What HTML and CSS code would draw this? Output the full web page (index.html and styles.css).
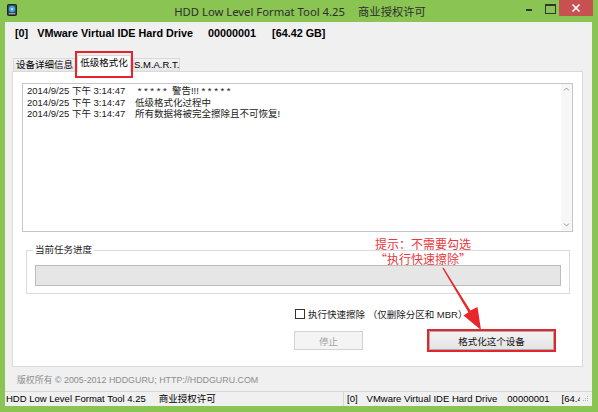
FILE: index.html
```html
<!DOCTYPE html>
<html lang="zh-CN">
<head>
    <meta charset="UTF-8">
    <meta name="viewport" content="width=device-width, initial-scale=1.0">
    <title>HDD Low Level Format Tool 4.25</title>
    <link rel="stylesheet" href="styles.css">
</head>
<body>
<div class="window">
    <div class="titlebar">
        <svg class="app-icon" viewBox="0 0 10 12" width="10" height="12">
            <rect x="0.5" y="0.5" width="9" height="11" rx="1" fill="#3b444d" stroke="#1d2329"/>
            <circle cx="5" cy="5" r="3.2" fill="#3fa4dc"/>
            <circle cx="5" cy="5" r="1" fill="#e4f5ff"/>
            <rect x="2" y="9" width="6" height="1.2" fill="#9aa3ab"/>
        </svg>
        <div class="title">HDD Low Level Format Tool 4.25<span class="title-cn">商业授权许可</span></div>
        <div class="caption">
            <span class="cap cap-min"></span>
            <span class="cap cap-max"></span>
            <span class="cap cap-close">
                <svg viewBox="0 0 34 16" width="34" height="16">
                    <path d="M13.5 4.5 L20.5 11.5 M20.5 4.5 L13.5 11.5" stroke="#fff" stroke-width="1.6"/>
                </svg>
            </span>
        </div>
    </div>

    <div class="client">
        <div class="drive-line">
            <span class="drv-idx">[0]</span>
            <span class="drv-name">VMware Virtual IDE Hard Drive</span>
            <span class="drv-serial">00000001</span>
            <span>[64.42 GB]</span>
        </div>

        <div class="tabs">
            <div class="tab tab-info">设备详细信息</div>
            <div class="tab tab-active">低级格式化</div>
            <div class="tab tab-smart">S.M.A.R.T.</div>
        </div>

        <div class="panel">
            <div class="log">
                <div class="log-lines">
                    <div class="log-line"><span class="stamp">2014/9/25 下午 3:14:47</span><span> * * * * *  警告!!! * * * * *</span></div>
                    <div class="log-line"><span class="stamp">2014/9/25 下午 3:14:47</span><span>低级格式化过程中</span></div>
                    <div class="log-line"><span class="stamp">2014/9/25 下午 3:14:47</span><span>所有数据将被完全擦除且不可恢复!</span></div>
                </div>
                <div class="scrollbar">
                    <svg viewBox="0 0 11 11" width="11" height="11"><path d="M3 6.5 L5.5 4 L8 6.5" fill="none" stroke="#9a9a9a" stroke-width="1"/></svg>
                    <svg viewBox="0 0 11 11" width="11" height="11"><path d="M3 4.5 L5.5 7 L8 4.5" fill="none" stroke="#9a9a9a" stroke-width="1"/></svg>
                </div>
            </div>

            <fieldset class="progress-group">
                <legend>当前任务进度</legend>
                <div class="progress"></div>
            </fieldset>

            <div class="actions">
                <label class="quick-erase"><span class="checkbox"></span>执行快速擦除 （仅删除分区和 MBR）</label>
                <div class="buttons">
                    <button class="btn btn-stop" disabled>停止</button>
                    <button class="btn btn-format">格式化这个设备</button>
                </div>
            </div>

            <!-- 标注 -->
            <div class="note">提示：不需要勾选<br>“执行快速擦除”</div>
            <svg class="arrow" viewBox="0 0 571 296" width="571" height="296">
                <polygon points="430.6,195.7 457.4,238.6 464.5,235 468,258 450.5,243.6 455.4,240.2 429.4,196.3" fill="#e8262b"/>
            </svg>
        </div>

        <div class="copyright">版权所有 © 2005-2012 HDDGURU; HTTP://HDDGURU.COM</div>

        <div class="statusbar">
            <div class="status-left">HDD Low Level Format Tool 4.25<span class="status-cn">商业授权许可</span></div>
            <div class="status-right">
                <span class="drv-idx">[0]</span><span class="st-name">VMware Virtual IDE Hard Drive</span><span class="st-serial">00000001</span><span>[64.42 GB]</span>
            </div>
            <svg class="grip" viewBox="0 0 10 13" width="10" height="13">
                <g fill="#b5b5b5">
                    <rect x="7" y="4" width="1" height="1"/>
                    <rect x="5" y="6" width="1" height="1"/><rect x="7" y="6" width="1" height="1"/>
                    <rect x="3" y="8" width="1" height="1"/><rect x="5" y="8" width="1" height="1"/><rect x="7" y="8" width="1" height="1"/>
                </g>
            </svg>
        </div>
    </div>
</div>
</body>
</html>
```

FILE: styles.css
```css
* {
    box-sizing: border-box;
}

body {
    margin: 0;
    width: 598px;
    height: 412px;
    overflow: hidden;
    background-color: #8ac453;
    font-family: "Liberation Sans", "Noto Sans CJK SC", sans-serif;
    font-size: 9.5px;
    color: #000;
}

.window {
    display: flex;
    flex-direction: column;
    height: 412px;
    padding-bottom: 6px;
    background-color: #8ac453;
}

/* 标题栏 */
.titlebar {
    flex: none;
    height: 22px;
    display: grid;
    grid-template-columns: 1fr auto 1fr;
    padding: 0 5px 0 7px;
}

.app-icon {
    margin-top: 4px;
}

.title {
    font-family: "Noto Sans", "Noto Sans CJK SC", sans-serif;
    font-size: 11.3px;
    line-height: 22px;
    padding-top: 1px;
    color: #2e2e2e;
    white-space: nowrap;
}

.title-cn {
    margin-left: 13px;
}

.caption {
    justify-self: end;
    display: flex;
    align-items: flex-start;
}

.cap {
    position: relative;
    height: 16px;
}

.cap-min {
    width: 22px;
}

.cap-min::before {
    content: "";
    position: absolute;
    left: 8px;
    top: 9px;
    width: 6px;
    height: 2px;
    background-color: #333;
}

.cap-max {
    width: 19px;
}

.cap-max::before {
    content: "";
    position: absolute;
    left: 5px;
    top: 4px;
    width: 9px;
    height: 7px;
    border: 1px solid #333;
    border-top-width: 2px;
}

.cap-close {
    width: 34px;
    background-color: #c75050;
}

.cap-close svg {
    display: block;
}

/* 客户区 */
.client {
    flex: 1;
    display: flex;
    flex-direction: column;
    margin: 0 6px 0 5px;
    background-color: #f0f0f0;
}

.drive-line {
    flex: none;
    height: 33px;
    display: flex;
    padding: 5px 0 0 10px;
    font-size: 10.8px;
    line-height: 12px;
    font-weight: bold;
    white-space: nowrap;
}

.drv-idx {
    margin-right: 9px;
}

.drv-name {
    margin-right: 15px;
}

.drv-serial {
    margin-right: 16px;
}

/* 选项卡 */
.tabs {
    flex: none;
    display: flex;
    align-items: flex-end;
    height: 17px;
    margin-bottom: -1px;
    padding-left: 8px;
    position: relative;
    z-index: 2;
}

.tab {
    height: 14px;
    text-align: center;
    line-height: 12px;
    border: 1px solid #d9d9d9;
    background: linear-gradient(#f2f2f2, #e6e6e6);
    white-space: nowrap;
}

.tab-info {
    width: 63px;
}

.tab-smart {
    width: 47px;
    margin-left: 2px;
}

.tab-active {
    position: relative;
    width: 54px;
    height: 17px;
    margin-left: 1px;
    line-height: 14px;
    background: #fff;
    border-bottom: none;
}

.tab-active::after {
    content: "";
    position: absolute;
    left: -3px;
    right: -3px;
    top: -5px;
    bottom: -6px;
    border: 2px solid #e3262d;
}

.panel {
    flex: none;
    position: relative;
    height: 296px;
    margin: 0 9px 0 7px;
    padding: 11px 9px 0 9px;
    border: 1px solid #d9d9d9;
    background-color: #fff;
}

.log {
    display: flex;
    height: 149px;
    border: 1px solid #c6c6c6;
    background-color: #fff;
}

.log-lines {
    flex: 1;
    padding: 1px 4px;
    line-height: 11.5px;
    color: #1a1a1a;
}

.log-line {
    display: flex;
    white-space: pre;
}

.stamp {
    width: 108px;
}

.scrollbar {
    width: 11px;
    display: flex;
    flex-direction: column;
    justify-content: space-between;
    padding: 0 0 1px;
    background-color: #f7f7f7;
}

.progress-group {
    margin: 12px 3px 0 4px;
    padding: 9px 8px 7px;
    min-width: 0;
    border: 1px solid #dcdcdc;
}

.progress-group legend {
    margin-left: -2px;
    padding: 0 2px;
    line-height: 12px;
    color: #222;
}

.progress {
    height: 21px;
    border: 1px solid #bcbcbc;
    background-color: #e6e6e6;
}

.actions {
    margin-top: 14px;
    padding-left: 272px;
}

.quick-erase {
    display: flex;
    align-items: center;
    height: 12px;
    color: #1a1a1a;
}

.checkbox {
    width: 10px;
    height: 10px;
    margin: 0 3px 0 1px;
    border: 1px solid #333;
    background-color: #fff;
}

.buttons {
    display: flex;
    gap: 66px;
    margin-top: 11px;
}

.btn {
    height: 19px;
    padding: 0;
    font-family: inherit;
    font-size: 9.5px;
    border-radius: 0;
}

.btn-stop {
    width: 69px;
    color: #a3a3a3;
    border: 1px solid #d2d2d2;
    background-color: #f4f4f4;
}

.btn-format {
    width: 125px;
    color: #111;
    border: 1px solid #acacac;
    background: linear-gradient(#f2f2f2, #e4e4e4);
    outline: 2px solid #e3262d;
    outline-offset: 0;
}

/* 红色标注 */
.note {
    position: absolute;
    left: 362px;
    top: 164px;
    font-family: "Noto Sans CJK SC", sans-serif;
    font-size: 12px;
    line-height: 15px;
    color: #e8383d;
    white-space: nowrap;
}

.arrow {
    position: absolute;
    left: 0;
    top: 0;
    pointer-events: none;
}

.copyright {
    flex: none;
    margin-top: 7px;
    padding-left: 12px;
    font-size: 8.9px;
    line-height: 12px;
    color: #8c8c8c;
}

/* 状态栏 */
.statusbar {
    flex: none;
    display: flex;
    height: 15px;
    margin-top: auto;
    border-top: 1px solid #d7d7d7;
    line-height: 13px;
    white-space: nowrap;
}

.status-left {
    width: 338px;
    padding-left: 1px;
}

.status-cn {
    margin-left: 13px;
}

.status-right {
    flex: 1;
    overflow: hidden;
    padding-left: 3px;
    border-left: 1px solid #d7d7d7;
}

.st-name {
    margin-right: 10px;
}

.st-serial {
    margin-right: 12px;
}

.grip {
    flex: none;
    margin-right: 2px;
}
```
